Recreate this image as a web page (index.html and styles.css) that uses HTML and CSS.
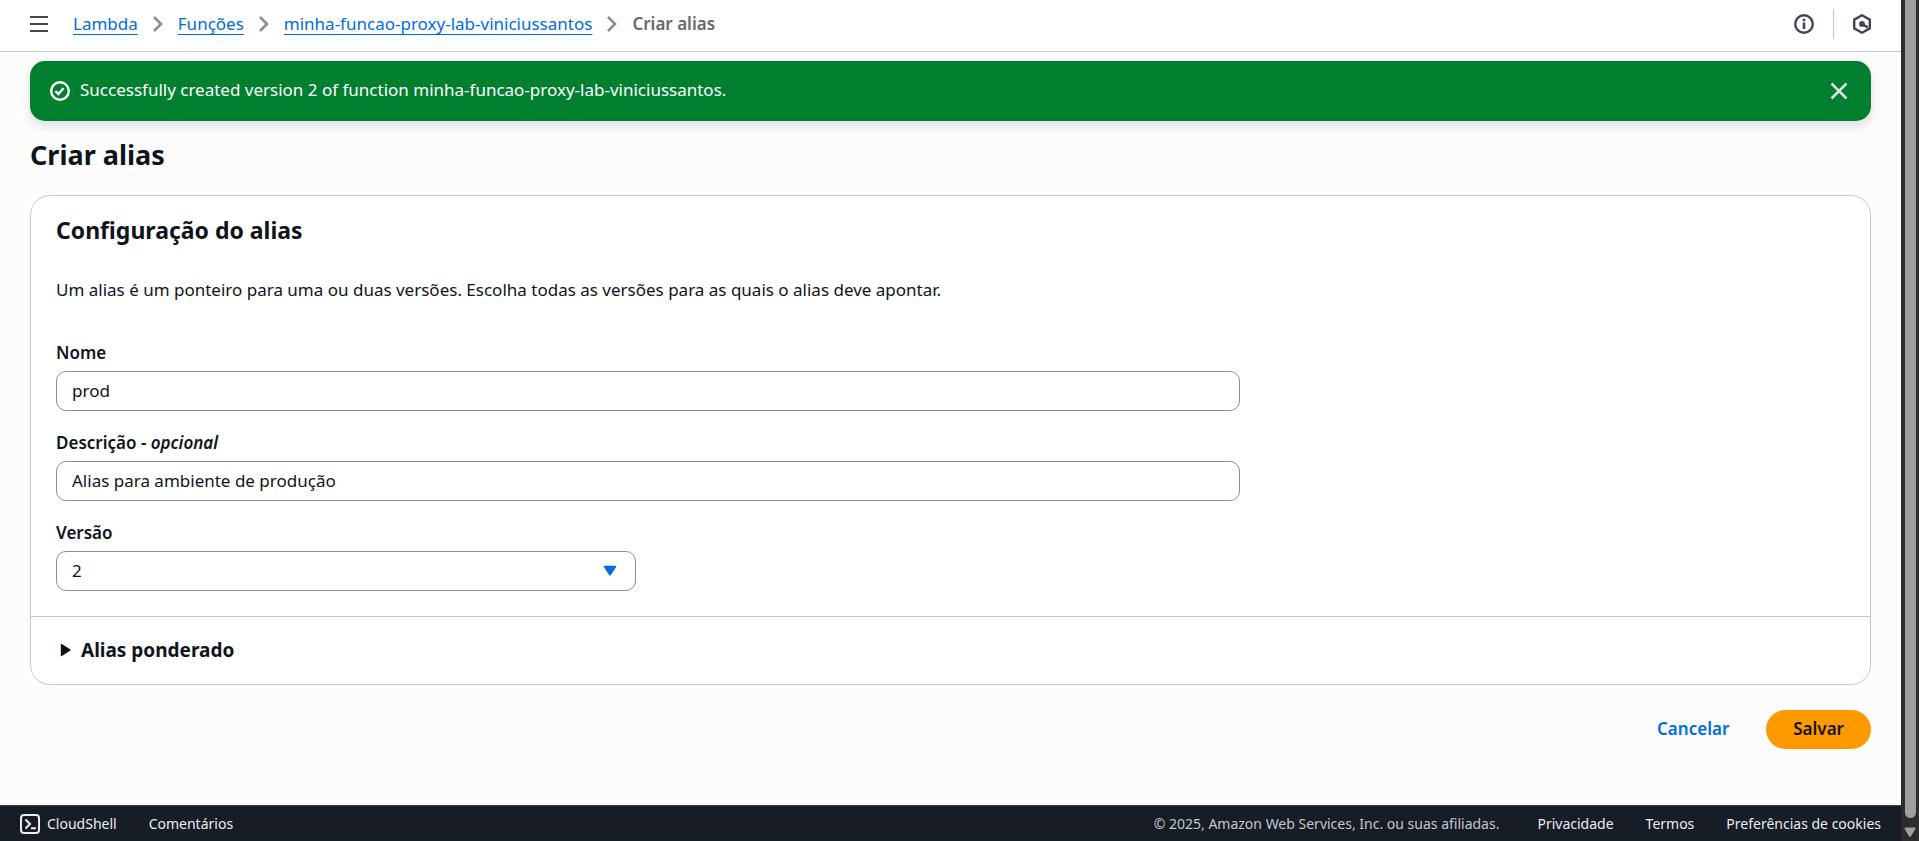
FILE: index.html
```html
<!DOCTYPE html>
<html lang="pt-BR">
<head>
<meta charset="utf-8">
<title>Criar alias - Lambda</title>
<link rel="stylesheet" href="styles.css">
</head>
<body>
<div class="app">
  <header class="topbar">
    <button class="icon-button menu-button" type="button" aria-label="Abrir navegação">
      <svg width="18" height="16" viewBox="0 0 18 16" fill="none" stroke="currentColor" stroke-width="2"><path d="M0 1h18M0 8h18M0 15h18"/></svg>
    </button>
    <nav class="breadcrumbs" aria-label="Trilha">
      <a href="#">Lambda</a>
      <svg class="chevron" width="10" height="18" viewBox="0 0 10 18"><path d="M1 2l7 7-7 7"/></svg>
      <a href="#">Funções</a>
      <svg class="chevron" width="10" height="18" viewBox="0 0 10 18"><path d="M1 2l7 7-7 7"/></svg>
      <a href="#">minha-funcao-proxy-lab-viniciussantos</a>
      <svg class="chevron" width="10" height="18" viewBox="0 0 10 18"><path d="M1 2l7 7-7 7"/></svg>
      <span class="current" aria-current="page">Criar alias</span>
    </nav>
    <div class="tools">
      <button class="icon-button" type="button" aria-label="Informações">
        <svg width="20" height="20" viewBox="0 0 20 20"><circle cx="10" cy="10" r="8.8" fill="none" stroke="currentColor" stroke-width="2.4"/><path d="M8.7 4.8h2.6v2.4H8.7zM8.7 8.5h2.6V15H8.7z" fill="currentColor"/></svg>
      </button>
      <span class="tool-divider"></span>
      <button class="icon-button" type="button" aria-label="Assistente">
        <svg width="18" height="20" viewBox="0 0 18 20"><path d="M9 1.3l7.8 4.3v8.8L9 18.700l-7.800-4.300V5.600z" fill="none" stroke="currentColor" stroke-width="2.4" stroke-linejoin="round"/><circle cx="9" cy="10" r="2.900" fill="currentColor"/><path d="M9 10l5.800 3.400" stroke="currentColor" stroke-width="2.4"/></svg>
      </button>
    </div>
  </header>

  <main class="content">
    <div class="flash" role="status">
      <svg class="flash-icon" width="20" height="20" viewBox="0 0 20 20" fill="none" stroke="currentColor" stroke-width="2.4"><circle cx="10" cy="10" r="8.8"/><path d="M5.4 10.2l3 2.9 5.2-6"/></svg>
      <p class="flash-text">Successfully created version 2 of function minha-funcao-proxy-lab-viniciussantos.</p>
      <button class="icon-button" type="button" aria-label="Fechar">
        <svg width="18" height="18" viewBox="0 0 18 18" fill="none" stroke="currentColor" stroke-width="2.5"><path d="M1.5 1.5l15 15M16.5 1.5l-15 15"/></svg>
      </button>
    </div>

    <h1 class="page-title">Criar alias</h1>

    <form class="form">
      <section class="card">
        <div class="card-body">
          <h2 class="card-title">Configuração do alias</h2>
          <p class="intro">Um alias é um ponteiro para uma ou duas versões. Escolha todas as versões para as quais o alias deve apontar.</p>
          <div class="fields">
            <div class="field wide">
              <label for="name">Nome</label>
              <input class="control" id="name" type="text" value="prod">
            </div>
            <div class="field wide">
              <label for="description">Descrição - <i>opcional</i></label>
              <input class="control" id="description" type="text" value="Alias para ambiente de produção">
            </div>
            <div class="field">
              <label for="version">Versão</label>
              <div class="select-wrap">
                <select class="control" id="version"><option>2</option><option>1</option></select>
                <svg class="select-arrow" width="14" height="12" viewBox="0 0 14 12"><path d="M1.5 1.5h11L7 9.8z" fill="currentColor" stroke="currentColor" stroke-width="1.6" stroke-linejoin="round"/></svg>
              </div>
            </div>
          </div>
        </div>
        <button class="expander" type="button" aria-expanded="false">
          <svg width="12" height="14" viewBox="0 0 12 14"><path d="M1.5 1.5L10 7l-8.5 5.5z" fill="currentColor" stroke="currentColor" stroke-width="1.4" stroke-linejoin="round"/></svg>
          Alias ponderado
        </button>
      </section>
      <div class="actions">
        <button class="button link" type="button">Cancelar</button>
        <button class="button primary" type="submit">Salvar</button>
      </div>
    </form>
  </main>

  <footer class="footer">
    <button class="footer-button" type="button">
      <svg width="20" height="20" viewBox="0 0 20 20" fill="none" stroke="currentColor" stroke-width="2"><rect x="1" y="1" width="18" height="18" rx="3"/><path d="M5.5 5.5L10 10l-4.500 4.500M11 14.300h5"/></svg>
      CloudShell
    </button>
    <a href="#">Comentários</a>
    <span class="copyright">© 2025, Amazon Web Services, Inc. ou suas afiliadas.</span>
    <a href="#">Privacidade</a>
    <a href="#">Termos</a>
    <a href="#">Preferências de cookies</a>
  </footer>
</div>
<div class="scrollbar" aria-hidden="true">
  <div class="scroll-thumb"></div>
  <svg width="12" height="11" viewBox="0 0 12 11"><path d="M1.5 1.5h9L6 9z" fill="currentColor" stroke="currentColor" stroke-width="2" stroke-linejoin="round"/></svg>
</div>
</body>
</html>
```
FILE: styles.css
```css
* {
  box-sizing: border-box;
}

body {
  margin: 0;
  min-height: 100vh;
  display: grid;
  grid-template-columns: minmax(0, 1fr) 18px;
  background: #fcfcfd;
  color: #0f141a;
  font: 17px/24px "Noto Sans", "Open Sans", sans-serif;
}

h1, h2, p {
  margin: 0;
}

button, input, select {
  font: inherit;
  color: inherit;
}

button {
  border: 0;
  padding: 0;
  background: none;
  cursor: pointer;
}

svg {
  flex: none;
  display: block;
}

.app {
  display: flex;
  flex-direction: column;
}

.topbar {
  display: flex;
  align-items: center;
  padding: 9px 30px 12px;
  border-bottom: 1px solid #c6c6cd;
  background: #fff;
}

.icon-button {
  display: flex;
}

.menu-button {
  margin-right: 25px;
  color: #424650;
}

.breadcrumbs {
  display: flex;
  align-items: center;
  gap: 15px;
}

.breadcrumbs a {
  color: #006ce0;
  text-decoration: underline;
  text-underline-offset: 4px;
  text-decoration-thickness: 1px;
}

.chevron {
  fill: none;
  stroke: #8c8c94;
  stroke-width: 2.6;
}

.current {
  color: #656871;
  font-weight: 600;
}

.tools {
  display: flex;
  align-items: center;
  gap: 19px;
  margin-left: auto;
  color: #424650;
}

.tool-divider {
  width: 1px;
  height: 30px;
  background: #c6c6cd;
}

.content {
  flex: 1;
  padding: 9px 30px 30px;
}

.flash {
  display: flex;
  align-items: center;
  gap: 10px;
  min-height: 60px;
  padding: 0 23px 0 20px;
  border-radius: 15px;
  background: #00802f;
  color: #fff;
  box-shadow: 0 5px 10px 1px rgba(0, 7, 22, 0.1);
}

.flash-text {
  flex: 1;
  padding-bottom: 2px;
}

.flash .icon-button {
  color: #dedee3;
}

.page-title {
  margin: 17px 0 24px;
  font-size: 27px;
  line-height: 33px;
  font-weight: 700;
}

.card {
  border: 1px solid #c6c6cd;
  border-radius: 20px;
  background: #fff;
}

.card-body {
  padding: 19px 25px 25px;
}

.card-title {
  font-size: 23px;
  line-height: 30px;
  font-weight: 700;
}

.intro {
  margin: 33px 0 39px;
}

.fields {
  display: grid;
  grid-template-columns: repeat(3, minmax(0, 1fr));
  gap: 20px 25px;
}

.field {
  display: flex;
  flex-direction: column;
  gap: 6px;
  grid-column: 1;
}

.field.wide {
  grid-column: 1 / span 2;
}

.field label {
  font-weight: 600;
}

.control {
  width: 100%;
  height: 40px;
  padding: 0 15px 1px;
  border: 1px solid #8c8c94;
  border-radius: 10px;
  background: #fff;
  appearance: none;
}

.select-wrap {
  position: relative;
}

.select-arrow {
  position: absolute;
  top: 14px;
  right: 19px;
  color: #006ce0;
  pointer-events: none;
}

.expander {
  display: flex;
  align-items: center;
  gap: 9px;
  width: 100%;
  padding: 19px 29px 20px;
  border-top: 1px solid #c6c6cd;
  font-size: 19px;
  line-height: 28px;
  font-weight: 700;
}

.actions {
  display: flex;
  justify-content: flex-end;
  gap: 10px;
  margin-top: 25px;
}

.button {
  padding: 7px 27px 8px;
  border-radius: 20px;
  font-weight: 600;
}

.button.link {
  color: #006ce0;
}

.button.primary {
  background: #ff9900;
}

.footer {
  display: flex;
  align-items: center;
  gap: 32px;
  padding: 8px 20px 7px;
  border-top: 1px solid #424650;
  background: #161d26;
  color: #ebebf0;
  font-size: 14px;
  line-height: 20px;
}

.footer a {
  color: inherit;
  text-decoration: none;
}

.footer-button {
  display: flex;
  align-items: center;
  gap: 7px;
}

.copyright {
  margin: 0 6px 0 auto;
  color: #c6c6cd;
}

.scrollbar {
  display: flex;
  flex-direction: column;
  align-items: center;
  gap: 9px;
  padding-bottom: 3px;
  background: #2c2c2c;
  color: #9f9f9f;
}

.scroll-thumb {
  flex: 1;
  width: 11px;
  border-radius: 0 0 6px 6px;
  background: #9f9f9f;
}
```
